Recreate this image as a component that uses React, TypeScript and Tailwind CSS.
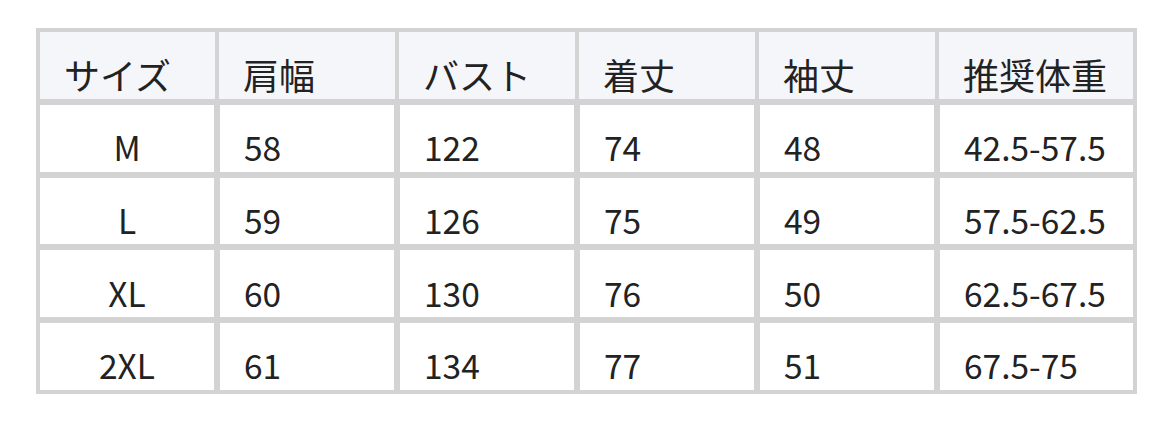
import React from "react";

const headers = ["サイズ", "肩幅", "バスト", "着丈", "袖丈", "推奨体重"];
const rows = [
  ["M", "58", "122", "74", "48", "42.5-57.5"],
  ["L", "59", "126", "75", "49", "57.5-62.5"],
  ["XL", "60", "130", "76", "50", "62.5-67.5"],
  ["2XL", "61", "134", "77", "51", "67.5-75"],
];

const font = { fontFamily: '"Noto Sans CJK JP", "Noto Sans", sans-serif' };

export default function App() {
  return (
    <div className="w-[1172px] h-[422px] bg-white pt-[28px] pl-[36px]" style={font}>
      <div className="grid w-[1101px] grid-cols-[174px_174px_174px_174px_174px_193px] gap-[6px] bg-[#d3d3d3] p-[4px] text-[#222222]">
        {headers.map((h, i) => (
          <div
            key={h}
            className={
              "flex h-[66.8px] items-end bg-[#f5f6fa] pb-[7px] pl-[24px] text-[36px] leading-none " +
              (i === 0 ? "mr-[-1px]" : i === headers.length - 1 ? "ml-[-1px]" : "mx-[-1px]")
            }
          >
            {h}
          </div>
        ))}
        {rows.map((r) =>
          r.map((c, j) => (
            <div
              key={r[0] + j}
              className={
                "flex h-[66.8px] items-end bg-white pb-[8px] text-[33.5px] leading-none " +
                (j === 0 ? "justify-center" : "pl-[24px]")
              }
            >
              {c}
            </div>
          ))
        )}
      </div>
    </div>
  );
}
